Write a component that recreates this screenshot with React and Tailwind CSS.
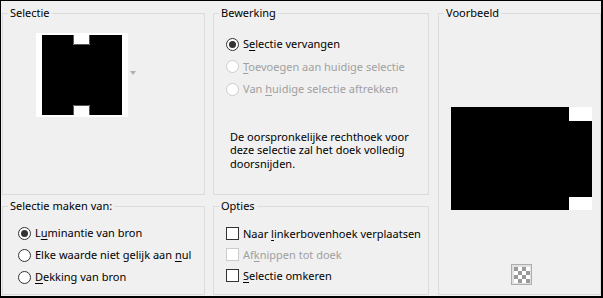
import React from 'react';

const FONT = { fontFamily: '"Noto Sans", "Open Sans", sans-serif' };

// Underlined access-key letter
function Key({ children }) {
  return <span className="underline underline-offset-2">{children}</span>;
}

function Radio({ checked, disabled, children }) {
  return (
    <div className="flex items-center gap-[4px] h-full whitespace-nowrap">
      <span
        className={`flex items-center justify-center w-[13px] h-[13px] rounded-full border bg-white shrink-0 ${
          disabled ? 'border-[#cccccc]' : 'border-[#333333]'
        }`}
      >
        {checked && <span className="w-[7px] h-[7px] rounded-full bg-[#333333]" />}
      </span>
      <span className={disabled ? 'text-[#a0a0a0]' : 'text-black'}>{children}</span>
    </div>
  );
}

function Checkbox({ disabled, children }) {
  return (
    <div className="flex items-center gap-[4px] h-full whitespace-nowrap">
      <span
        className={`w-[13px] h-[13px] border bg-white shrink-0 ${
          disabled ? 'border-[#cccccc]' : 'border-[#333333]'
        }`}
      />
      <span className={disabled ? 'text-[#a0a0a0]' : 'text-black'}>{children}</span>
    </div>
  );
}

function Group({ title, className, children }) {
  return (
    <fieldset className={`border border-[#dcdcdc] min-w-0 ${className}`}>
      <legend className="ml-[5px] px-[2px] leading-[16px] text-black">{title}</legend>
      {children}
    </fieldset>
  );
}

function SelectionThumb() {
  return (
    <svg width="92" height="84" viewBox="0 0 92 84">
      <rect x="0" y="0" width="92" height="84" fill="#ffffff" />
      <rect x="6" y="2" width="80" height="80" fill="#000000" />
      <rect x="37" y="2" width="17" height="10" fill="#ffffff" />
      <path d="M37.5 2 V11.5 H53.5 V2" fill="none" stroke="#555555" strokeWidth="1" />
      <rect x="37" y="72" width="17" height="10" fill="#ffffff" />
      <path d="M37.5 82 V72.5 H53.5 V82" fill="none" stroke="#555555" strokeWidth="1" />
    </svg>
  );
}

function PreviewImage() {
  return (
    <svg width="141" height="103" viewBox="0 0 141 103">
      <rect x="0" y="0" width="141" height="103" fill="#000000" />
      <rect x="118" y="0" width="23" height="14" fill="#ffffff" />
      <rect x="118" y="90" width="23" height="13" fill="#ffffff" />
    </svg>
  );
}

function CheckerButton() {
  const cells = [];
  for (let r = 0; r < 4; r++) {
    for (let c = 0; c < 4; c++) {
      if ((r + c) % 2 === 0) cells.push(<rect key={`${r}-${c}`} x={c * 4} y={r * 4} width="4" height="4" fill="#9a9a9a" />);
    }
  }
  return (
    <div className="w-[21px] h-[21px] border border-[#adadad] bg-[#e1e1e1] flex items-center justify-center">
      <svg width="16" height="16" viewBox="0 0 16 16">
        <rect x="0" y="0" width="16" height="16" fill="#ffffff" />
        {cells}
      </svg>
    </div>
  );
}

export default function App() {
  return (
    <div
      className="w-[603px] h-[298px] bg-[#f0f0f0] border-t border-l border-r-2 border-b-2 border-black pt-[4px] pl-[1px] flex text-[11px] leading-[16px]"
      style={FONT}
    >
      {/* Left column */}
      <div className="flex flex-col w-[203px]">
        <Group title="Selectie" className="h-[190px]">
          <div className="flex items-center mt-[12px] ml-[33px]">
            <SelectionThumb />
            <svg width="6" height="4" viewBox="0 0 6 4" className="ml-[2px] mt-[-4px]">
              <path d="M0 0 H6 L3 4 Z" fill="#b0b0b0" />
            </svg>
          </div>
        </Group>
        <Group title="Selectie maken van:" className="h-[97px] mt-[3px]">
          <div className="flex flex-col mt-[8px] pl-[15px]">
            <div className="h-[22px]">
              <Radio checked>
                L<Key>u</Key>minantie van bron
              </Radio>
            </div>
            <div className="h-[22px]">
              <Radio>
                Elke waarde niet gelijk aan <Key>n</Key>ul
              </Radio>
            </div>
            <div className="h-[22px]">
              <Radio>
                <Key>D</Key>ekking van bron
              </Radio>
            </div>
          </div>
        </Group>
      </div>

      {/* Middle column */}
      <div className="flex flex-col w-[216px] ml-[8px]">
        <Group title="Bewerking" className="h-[190px]">
          <div className="flex flex-col mt-[12px] pl-[12px]">
            <div className="h-[22.5px]">
              <Radio checked>
                S<Key>e</Key>lectie vervangen
              </Radio>
            </div>
            <div className="h-[22.5px]">
              <Radio disabled>
                <Key>T</Key>oevoegen aan huidige selectie
              </Radio>
            </div>
            <div className="h-[22.5px]">
              <Radio disabled>
                Van <Key>h</Key>uidige selectie aftrekken
              </Radio>
            </div>
          </div>
          <p className="mt-[29px] pl-[16px] leading-[13.5px] text-black whitespace-nowrap">
            De oorspronkelijke rechthoek voor
            <br />
            deze selectie zal het doek volledig
            <br />
            doorsnijden.
          </p>
        </Group>
        <Group title="Opties" className="h-[97px] mt-[3px]">
          <div className="flex flex-col mt-[9px] pl-[12px]">
            <div className="h-[21px]">
              <Checkbox>
                Naar <Key>l</Key>inkerbovenhoek verplaatsen
              </Checkbox>
            </div>
            <div className="h-[21px]">
              <Checkbox disabled>
                Af<Key>k</Key>nippen tot doek
              </Checkbox>
            </div>
            <div className="h-[21px]">
              <Checkbox>
                <Key>S</Key>electie omkeren
              </Checkbox>
            </div>
          </div>
        </Group>
      </div>

      {/* Right column */}
      <div className="flex flex-col w-[163px] ml-[9px]">
        <Group title="Voorbeeld" className="h-[290px]">
          <div className="mt-[86px] ml-[12px]">
            <PreviewImage />
          </div>
          <div className="mt-[54px] ml-[72px]">
            <CheckerButton />
          </div>
        </Group>
      </div>
    </div>
  );
}
